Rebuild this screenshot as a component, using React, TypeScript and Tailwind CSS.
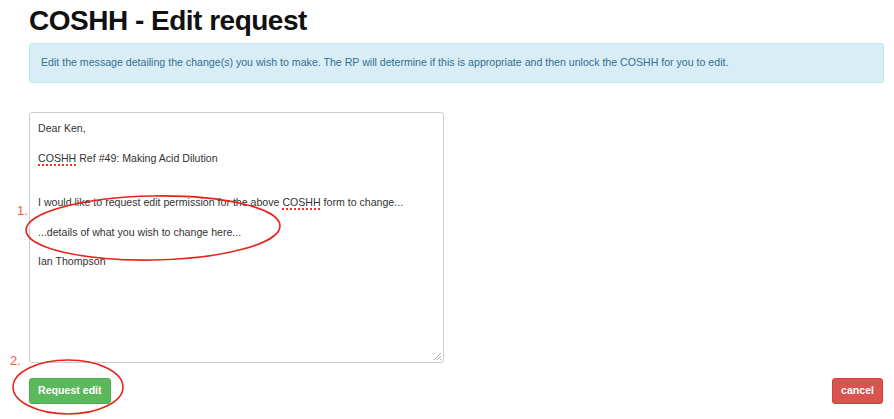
import React from "react";

function Misspelt({ children }: { children: React.ReactNode }) {
  return (
    <span className="underline decoration-dotted decoration-[#e33] decoration-[1.5px] underline-offset-[3px]">
      {children}
    </span>
  );
}

export default function App() {
  return (
    <div
      className="relative w-[894px] h-[419px] bg-white overflow-hidden px-[29px]"
      style={{ fontFamily: '"Liberation Sans", Arial, sans-serif' }}
    >
      <h1 className="text-[28px] leading-[30px] font-bold text-[#111] pt-[6px] tracking-[-0.5px]">
        COSHH - Edit request
      </h1>

      <div className="mt-[7px] w-[855px] h-[40px] flex items-center px-[11px] bg-[#d9edf7] border border-[#bce8f1] rounded-[3px] text-[10.6px] text-[#31708f]">
        Edit the message detailing the change(s) you wish to make. The RP will
        determine if this is appropriate and then unlock the COSHH for you to edit.
      </div>

      <div className="relative mt-[29px] w-[415px] h-[251px] border border-[#ccc] rounded-[3px] px-[8px] pt-[8px] text-[10.6px] leading-[14.8px] text-[#333]">
        <div>Dear Ken,</div>
        <div>&nbsp;</div>
        <div>
          <Misspelt>COSHH</Misspelt> Ref #49: Making Acid Dilution
        </div>
        <div>&nbsp;</div>
        <div>&nbsp;</div>
        <div>
          I would like to request edit permission for the above{" "}
          <Misspelt>COSHH</Misspelt> form to change...
        </div>
        <div>&nbsp;</div>
        <div>...details of what you wish to change here...</div>
        <div>&nbsp;</div>
        <div>Ian Thompson</div>
        <svg
          className="absolute right-[1px] bottom-[1px]"
          width="9"
          height="9"
          viewBox="0 0 9 9"
        >
          <path d="M8 1 L1 8 M8 4 L4 8 M8 7 L7 8" stroke="#999" strokeWidth="0.8" />
        </svg>
      </div>

      <div className="mt-[15px] flex justify-between w-[854px]">
        <button className="h-[26px] px-[8px] bg-[#5cb85c] border border-[#4cae4c] rounded-[3px] text-white text-[10.6px] font-bold">
          Request edit
        </button>
        <button className="h-[26px] px-[8px] bg-[#d9534f] border border-[#d43f3a] rounded-[3px] text-white text-[10.6px] font-bold">
          cancel
        </button>
      </div>

      {/* annotations */}
      <span className="absolute left-[17px] top-[201px] text-[13px] text-[#f05a4a]">1.</span>
      <span className="absolute left-[10px] top-[351px] text-[13px] text-[#f05a4a]">2.</span>
      <svg className="absolute left-0 top-0 pointer-events-none" width="894" height="419">
        <ellipse cx="153" cy="228" rx="127" ry="32" fill="none" stroke="#e8231b" strokeWidth="1.6" transform="rotate(-1 153 228)" />
        <ellipse cx="68" cy="387" rx="55" ry="27" fill="none" stroke="#e8231b" strokeWidth="1.6" />
      </svg>
    </div>
  );
}
